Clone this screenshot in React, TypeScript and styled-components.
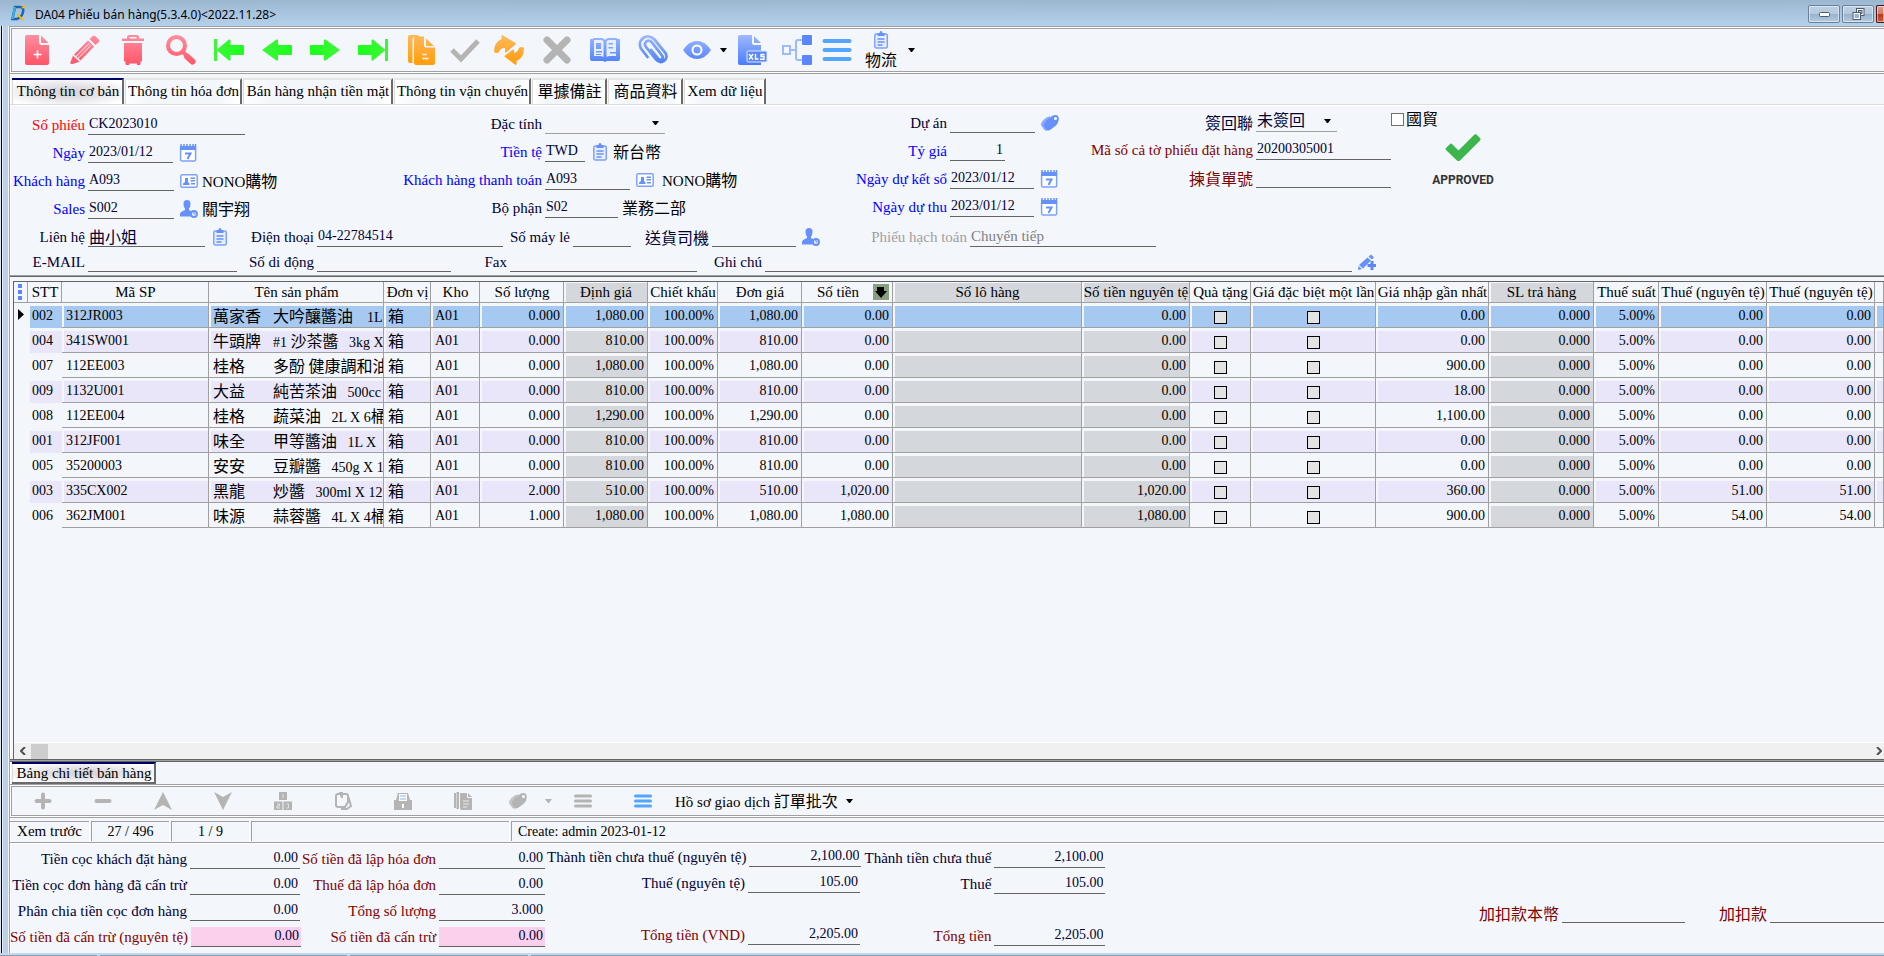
import React, { useId, useState } from "react";
import styled, { createGlobalStyle, css } from "styled-components";

const c = {
  page: "#f3f6fb",
  line: "#a0a0a0",
  dark: "#646464",
  ink: "#000033",
  blue: "#0000ff",
  red: "#ff0000",
  maroon: "#800000",
  muted: "#a0a0a0",
  frame: "#bcd1e6",
  icon: "#6691fb",
  grayIcon: "#b4b4b4",
};

const serif = `"Liberation Serif", "Noto Sans CJK TC", serif`;

const GlobalStyle = createGlobalStyle`
  *, *::before, *::after { box-sizing: border-box; }
  body { margin: 0; background: ${c.page}; overflow: hidden; }
  button, input, select { font: inherit; color: inherit; }
  body, button, input, select { font-family: ${serif}; }
`;

/* ---------- text ---------- */

const Han = styled.span`
  font-family: "Noto Sans CJK TC", sans-serif;
  font-size: 16px;
  font-weight: 400;
`;

/* Chinese runs are set one step larger than the Latin text beside them. */
function T({ children }: { children: string }) {
  const parts = children.split(/([\u3400-\u9fff]+)/);
  return (
    <>
      {parts.map((p, i) => (i % 2 ? <Han key={i}>{p}</Han> : p))}
    </>
  );
}

const hasHan = (s: string) => /[\u3400-\u9fff]/.test(s);

/* ---------- window frame ---------- */

const Window = styled.div`
  display: flex;
  flex-direction: column;
  min-height: 100vh;
  font-size: 15px;
  line-height: 20px;
  color: #000;
  background: ${c.page};
`;

const TitleBar = styled.header`
  display: flex;
  align-items: center;
  height: 26px;
  padding-left: 11px;
  overflow: hidden;
  background: linear-gradient(#9bb6cf, #a9c4de 50%, #b5d0ea);
`;

const Title = styled.h1`
  flex: 1;
  margin: 3px 0 0 9px;
  font-family: "Noto Sans", sans-serif;
  font-size: 12px;
  font-weight: 400;
  white-space: nowrap;
`;

const WinButtons = styled.div`
  display: flex;
  gap: 2px;
`;

const WinButton = styled.button<{ $close?: boolean }>`
  display: grid;
  place-items: center;
  width: ${(p) => (p.$close ? 8 : 32)}px;
  height: 18px;
  margin-top: 2px;
  padding: 0;
  border: 1px solid ${(p) => (p.$close ? "#4a1410" : "#6c7f96")};
  border-right-width: ${(p) => (p.$close ? 0 : 1)}px;
  border-radius: ${(p) => (p.$close ? "2px 0 0 2px" : "2px")};
  box-shadow: inset 0 0 0 1px rgba(255, 255, 255, 0.5);
  background: ${(p) =>
    p.$close
      ? "linear-gradient(#e0a093, #d07a68 48%, #b8391f 50%, #cc5a3c)"
      : "linear-gradient(#bdd0e3, #b4c9df 48%, #98b2cb 50%, #b2cae2)"};
`;

const Frame = styled.div`
  flex: 1;
  display: flex;
  flex-direction: column;
  min-width: 0;
  border-left: 1px solid ${c.line};
  box-shadow: inset 1px 0 #fff;
`;

const Body = styled.div`
  flex: 1;
  display: flex;
  padding-left: 9px;
  background: linear-gradient(
    to right,
    #d9e8f6 1px,
    #000 1px,
    #000 2px,
    #e8f1fa 2px,
    #e8f1fa 3px,
    ${c.frame} 3px,
    ${c.frame} 8px,
    ${c.page} 8px
  );
`;

const WindowFoot = styled.footer`
  display: flex;
  gap: 3px;
  height: 3px;
  padding-top: 2px;
  background: #c0d8f0;
`;

const FootPart = styled.div<{ $w?: number }>`
  flex: ${(p) => (p.$w ? `0 0 ${p.$w}px` : "1")};
  background: #8f9ba8;
`;

/* ---------- toolbars ---------- */

const Toolbar = styled.div<{ $h: number }>`
  display: flex;
  align-items: stretch;
  height: ${(p) => p.$h}px;
  padding-left: 1px;
  border: 1px solid ${c.line};
  border-right: 0;
  border-left: 0;
  box-shadow: inset 0 1px #fff, inset 0 -1px #fff, inset 1px 0 #fff;
`;

const ToolbarInner = styled.div`
  flex: 1;
  display: flex;
  margin: 1px 0;
  border: 1px solid ${c.line};
  border-right: 0;
  padding-left: 1px;
`;

const ToolButton = styled.button<{ $w: number }>`
  display: flex;
  flex-direction: column;
  align-items: center;
  justify-content: center;
  flex: 0 0 ${(p) => p.$w}px;
  padding: 0;
  border: 0;
  background: none;
  line-height: 20px;
  color: #000;
`;

const TextTool = styled.button`
  display: flex;
  align-items: center;
  gap: 8px;
  padding: 0 2px;
  border: 0;
  background: none;
  color: #000;
  white-space: pre;
`;

/* ---------- tabs ---------- */

const TabList = styled.div<{ $bottom?: boolean }>`
  display: flex;
  align-items: flex-end;
  gap: 1px;
  height: ${(p) => (p.$bottom ? 22 : 31)}px;
  padding: 0 2px;
  border-bottom: ${(p) => (p.$bottom ? 0 : 1)}px solid #dcdcdc;
`;

const Tab = styled.button<{ $active?: boolean; $w: number; $bottom?: boolean }>`
  flex: 0 0 ${(p) => p.$w}px;
  height: ${(p) => (p.$bottom ? 22 : 26)}px;
  padding: 0 0 2px 2px;
  border: 0;
  border-top: 2px solid ${(p) => (p.$active ? "#000066" : "#e6e6e6")};
  border-right: 2px solid #6a6a6a;
  border-bottom: ${(p) => (p.$bottom ? "2px solid #6a6a6a" : "0")};
  box-shadow: inset 1px 0 #dcdcdc;
  background: ${(p) =>
    p.$active
      ? "radial-gradient(ellipse at center, #d2d2d6 0%, #e6e6ea 45%, #fff 90%)"
      : "linear-gradient(to right, #fff, #f3f6fb 20%, #f3f6fb 80%, #fff)"};
  white-space: nowrap;
  line-height: 18px;
`;

/* ---------- fields ---------- */

type Tone = "ink" | "blue" | "red" | "maroon" | "muted";

const FieldBox = styled.div`
  display: flex;
  align-items: flex-end;
  gap: 3px;
`;

const Label = styled.label<{ $w: number; $tone: Tone }>`
  display: flex;
  justify-content: flex-end;
  flex: 0 0 ${(p) => p.$w + 1}px;
  height: 20px;
  white-space: pre;
  color: ${(p) => c[p.$tone]};
`;

const control = css`
  height: 22px;
  padding: 1px 2px 0 1px;
  border: 0;
  border-bottom: 1px solid ${c.dark};
  border-radius: 0;
  outline: 0;
  background: transparent;
  color: ${c.ink};
`;

const Input = styled.input<{ $w: number; $han: boolean; $pink?: boolean; $right?: boolean; $muted?: boolean }>`
  ${control}
  width: ${(p) => p.$w}px;
  font-size: ${(p) => (p.$han ? 16 : p.$muted ? 15 : 14)}px;
  text-align: ${(p) => (p.$right ? "right" : "left")};
  background: ${(p) =>
    p.$pink ? "linear-gradient(#fad0ec, #fad0ec) no-repeat 0 2px" : "transparent"};
  color: ${(p) => (p.$muted ? "#808080" : c.ink)};
`;

const SelectWrap = styled.div<{ $w: number }>`
  display: grid;
  align-items: center;
  width: ${(p) => p.$w}px;
  & > * {
    grid-area: 1 / 1;
  }
  & > svg {
    justify-self: end;
    margin-right: 6px;
    pointer-events: none;
  }
`;

const Select = styled.select`
  ${control}
  appearance: none;
  width: 100%;
  font-size: 16px;
  border-bottom-color: ${c.line};
`;

interface FieldProps {
  label: string;
  lw: number;
  w: number;
  value?: string;
  tone?: Tone;
  right?: boolean;
  pink?: boolean;
}

function Field({ label, lw, w, value = "", tone = "ink", right, pink }: FieldProps) {
  const id = useId();
  return (
    <FieldBox>
      <Label htmlFor={id} $w={lw} $tone={tone}>
        <span><T>{label}</T></span>
      </Label>
      <Input
        id={id}
        $w={w}
        $han={hasHan(value)}
        $right={right}
        $pink={pink}
        $muted={tone === "muted"}
        defaultValue={value}
      />
    </FieldBox>
  );
}

function SelectField({ label, lw, w, value }: FieldProps) {
  const id = useId();
  return (
    <FieldBox>
      <Label htmlFor={id} $w={lw} $tone="ink">
        <span><T>{label}</T></span>
      </Label>
      <SelectWrap $w={w}>
        <Select id={id} defaultValue={value}>
          <option>{value}</option>
        </Select>
        <Caret />
      </SelectWrap>
    </FieldBox>
  );
}

/* ---------- form layout ---------- */

const Form = styled.form`
  padding: 2px 0 3px;
  border-bottom: 1px solid ${c.line};
  box-shadow: inset 0 1px #fff, 0 1px ${c.dark};
`;

const FormTop = styled.div`
  display: flex;
`;

const Group = styled.div<{ $w: number; $lift?: number }>`
  flex: 0 0 ${(p) => p.$w}px;
  margin-top: ${(p) => -(p.$lift ?? 0)}px;
`;

const Row = styled.div<{ $h?: number }>`
  display: flex;
  align-items: flex-end;
  height: ${(p) => p.$h ?? 28}px;
`;

const IconButton = styled.button`
  display: flex;
  margin: 0 4px 1px 6px;
  padding: 0;
  border: 0;
  background: none;
`;

const Note = styled.output<{ $gap?: number }>`
  height: 21px;
  margin-left: ${(p) => p.$gap ?? 0}px;
  color: #000;
  white-space: nowrap;
`;

const CheckLabel = styled.label`
  display: flex;
  align-items: center;
  gap: 2px;
  height: 24px;
`;

const Box = styled.input<{ $gray?: boolean }>`
  appearance: none;
  flex: none;
  width: 13px;
  height: 13px;
  margin: 0;
  border: 1px solid ${(p) => (p.$gray ? "#000" : "#707070")};
  background: ${(p) => (p.$gray ? "#e3e3e3" : "#fff")};
`;

const Stamp = styled.div`
  display: flex;
  flex-direction: column;
  align-items: center;
  gap: 10px;
  width: 58px;
  margin: 3px 0 0 43px;
`;

const StampText = styled.strong`
  font-family: "Liberation Sans Narrow", Roboto, sans-serif;
  font-size: 12px;
  font-weight: 700;
  line-height: 16px;
  color: #333;
`;

/* ---------- grid ---------- */

const GridPanel = styled.section`
  flex: 1;
  display: flex;
  flex-direction: column;
  margin: 5px 0 0 3px;
  border: 1px solid ${c.dark};
  border-right: 0;
  border-bottom: 0;
  overflow: hidden;
`;

const GridBody = styled.div`
  flex: 1;
  overflow: hidden;
`;

const Table = styled.table`
  width: 100%;
  table-layout: fixed;
  border-collapse: separate;
  border-spacing: 0;
`;

const Th = styled.th<{ $gray?: boolean }>`
  height: 21px;
  padding: 0 0 0 1px;
  overflow: hidden;
  border-right: 1px solid ${c.line};
  border-bottom: 1px solid ${c.line};
  background: ${(p) => (p.$gray ? "#d4d7db" : c.page)};
  box-shadow: inset 2px 1px #f3f6fb;
  font-weight: 400;
  line-height: 20px;
  white-space: nowrap;
  & > svg {
    display: block;
  }
`;

const SortHead = styled.div`
  display: flex;
  align-items: center;
  justify-content: flex-end;
  gap: 14px;
  padding-right: 3px;
`;

const Td = styled.td<{ $fill: string; $align?: string; $bare?: boolean }>`
  height: 25px;
  padding: 0 ${(p) => (p.$align === "right" ? 3 : 0)}px 0 4px;
  overflow: hidden;
  border-right: 1px solid ${(p) => (p.$bare ? "transparent" : c.line)};
  border-bottom: 1px solid ${(p) => (p.$bare ? "transparent" : c.line)};
  background: linear-gradient(${(p) => p.$fill}, ${(p) => p.$fill}) no-repeat 2px 3px;
  text-align: ${(p) => p.$align ?? "left"};
  font-size: 14px;
  line-height: 23px;
  white-space: pre;
`;

const CellLine = styled.div`
  height: 23px;
  overflow: hidden;
`;

const CheckCell = styled.div`
  display: flex;
  justify-content: center;
  padding: 4px 3px 0 0;
`;

const Brand = styled.span`
  display: inline-block;
  width: 60px;
`;

const ScrollBar = styled.div`
  display: flex;
  align-items: center;
  height: 17px;
  border-top: 1px solid #fff;
  background: #f0f0f0;
`;

const ScrollEnd = styled.button<{ $w: number }>`
  display: grid;
  place-items: center;
  width: ${(p) => p.$w}px;
  padding: 0;
  border: 0;
  background: none;
`;

const ScrollTrack = styled.div`
  flex: 1;
  height: 15px;
`;

const ScrollThumb = styled.div`
  width: 17px;
  height: 15px;
  background: #cdcdcd;
`;

const GridEdge = styled.div`
  height: 3px;
  border-top: 1px solid ${c.dark};
  border-bottom: 1px solid ${c.dark};
  background: ${c.line};
`;

/* ---------- status and totals ---------- */

const StatusBar = styled.div`
  display: flex;
  gap: 2px;
  height: 25px;
  padding-top: 3px;
  border-bottom: 1px solid ${c.line};
`;

const StatusCell = styled.div<{ $w?: number; $left?: boolean }>`
  flex: ${(p) => (p.$w ? `0 0 ${p.$w}px` : "1")};
  height: 20px;
  padding: 0 6px;
  border-top: 1px solid ${c.line};
  border-left: 1px solid ${c.line};
  box-shadow: 1px 0 #fff;
  font-size: 14px;
  line-height: 19px;
  text-align: ${(p) => (p.$left ? "left" : "center")};
  &:first-child {
    border-left: 0;
    font-size: 15px;
  }
`;

const Totals = styled.form`
  display: flex;
  padding: 0 0 6px;
  box-shadow: inset 0 1px #fff;
`;

const TotalsSide = styled.div`
  flex: 1;
  display: flex;
  align-items: flex-start;
  justify-content: flex-end;
  gap: 33px;
  margin-top: 54px;
  overflow: hidden;
`;

/* ---------- drawings ---------- */

const Hidden = styled.svg`
  position: absolute;
  width: 0;
  height: 0;
`;

const grads: [string, string, string][] = [
  ["gPink", "#ff8f9f", "#ff5468"],
  ["gOrange", "#ffb95c", "#ff9c0a"],
  ["gBlue", "#9db9ff", "#4a7cfa"],
];

function Gradients() {
  return (
    <Hidden aria-hidden>
      <defs>
        {grads.map(([id, a, b]) => (
          <linearGradient key={id} id={id} gradientUnits="userSpaceOnUse" x1="0" y1="0" x2="0" y2="30">
            <stop offset="0" stopColor={a} />
            <stop offset="1" stopColor={b} />
          </linearGradient>
        ))}
        <linearGradient id="gGreen" gradientUnits="userSpaceOnUse" x1="0" y1="15" x2="30" y2="15">
          <stop offset="0" stopColor="#3ff53a" />
          <stop offset="1" stopColor="#1bff1b" />
        </linearGradient>
      </defs>
    </Hidden>
  );
}

const P = "url(#gPink)";
const O = "url(#gOrange)";
const B = "url(#gBlue)";
const G = "url(#gGreen)";

const Big = ({ children }: { children: React.ReactNode }) => (
  <svg width="30" height="30" viewBox="0 0 30 30" aria-hidden>{children}</svg>
);
const Small = ({ children }: { children: React.ReactNode }) => (
  <svg width="18" height="18" viewBox="0 0 18 18" aria-hidden>{children}</svg>
);

const Caret = ({ color = "#000" }: { color?: string }) => (
  <svg width="7" height="4" viewBox="0 0 7 4" aria-hidden><path d="M0 0h7L4 4H3z" fill={color} /></svg>
);

const NewIcon = () => (
  <Big>
    <path fill={P} d="M5 0h12v7a3 3 0 0 0 3 3h7v18a2 2 0 0 1-2 2H5a2 2 0 0 1-2-2V2a2 2 0 0 1 2-2zM19 0.5L26.500 8H20a1 1 0 0 1-1-1z" />
    <path stroke="#fff" strokeWidth="1.6" d="M15.500 15.500v8M11.500 19.500h8" />
  </Big>
);
const PencilIcon = () => (
  <Big>
    <path fill={P} d="M4 19.500L18 5.500l6 6L10.500 25.500zM19.500 4L22.500 1.300a2 2 0 0 1 3 0l3 3a2 2 0 0 1 0 3L25.500 10zM3 20.500l6.500 6.200-7 2.300a1.500 1.500 0 0 1-2-2z" />
    <path stroke="#fff" strokeWidth="1.200" d="M8 23.500L21 10M6 21.500L19 8.500" opacity=".6" />
  </Big>
);
const TrashIcon = () => (
  <Big>
    <path fill={P} d="M9 3.500V2a2 2 0 0 1 2-2h8a2 2 0 0 1 2 2v1.500h5V6H4V3.500zM11.500 3.500h7V2h-7zM6 8h18v18.500h-1.500V29a1 1 0 0 1-1 1H19v-1.500h-8V30H8.500a1 1 0 0 1-1-1v-2.500H6z" />
  </Big>
);
const SearchIcon = () => (
  <Big>
    <circle cx="10.500" cy="10.500" r="8.500" fill="none" stroke={P} strokeWidth="4" />
    <path stroke={P} strokeWidth="4" d="M16 16l4 4" />
    <path stroke={P} strokeWidth="6" strokeLinecap="round" d="M21 21.500l5.500 5" />
  </Big>
);
const Arrow = ({ bar, flip }: { bar?: boolean; flip?: boolean }) => (
  <Big>
    <g transform={flip ? "rotate(180 15 15)" : undefined} fill={G}>
      {bar && <path d="M0 4h3v22H0z" />}
      {bar ? (
        <path d="M2.500 15L15 4.500q1.500-.5 1.500 1V10H29q1 0 1 1v8q0 1-1 1H16.500v4.500q0 1.500-1.500 1z" />
      ) : (
        <path d="M0 15L14.500 4.500q1.500-.5 1.500 1V10h13q1 0 1 1v8q0 1-1 1H16v4.500q0 1.500-1.500 1z" />
      )}
    </g>
  </Big>
);
const CopyIcon = () => (
  <Big>
    <path fill={O} d="M4 0h7q2 0 3 2H8.500q-2 0-2 3v23H4q-2 0-2-2V2q0-2 2-2z" />
    <path fill={O} d="M10 1.500h8v9q0 2 2 2h9V28q0 2-2 2H10q-2 0-2-2V3.500q0-2 2-2zM20 3.500L28 11h-7.500q-.5 0-.5-.5z" />
    <path stroke="#fff" strokeWidth="1.500" d="M16.500 19.500h4M16.500 23.500h6" />
  </Big>
);
const CheckIcon = () => (
  <Big><path fill="none" stroke={c.grayIcon} strokeWidth="5" d="M2 15l9 9L28 6" /></Big>
);
const RefreshIcon = () => (
  <Big>
    <path fill={O} d="M0 17Q0 7 7.500 4V1q0-1.500 1.500-.5l12.500 7.500q1 .8 0 1.500L12 17.500q-1 .5-1-1V13q-5 0-6 4-2 2-5 0z" />
    <path fill={O} d="M30 13q0 10-7.500 13v3q0 1.500-1.500.5L11 22q-1-.8 0-1.500l8-6q1-.5 1 1V18q4-1 5-5 2-2 5 0z" />
  </Big>
);
const CrossIcon = () => (
  <Big><path stroke={c.grayIcon} strokeWidth="7" strokeLinecap="round" d="M5 5l20 20M25 5L5 25" /></Big>
);
const BookIcon = () => (
  <Big>
    <path fill={B} d="M0 5q0-1 1-1h2V3h8q3 0 4 2 1-2 4-2h8v1h2q1 0 1 1v19q0 2-2 2H17l-2 1-2-1H2q-2 0-2-2z" />
    <path fill="#e7eeff" d="M4 5h7q2 0 2.500 1.500V22Q12 21 10 21H4zM26 5h-7q-2 0-2.500 1.500V22q1.500-1 3.500-1h6z" />
    <path fill={B} d="M6 8h5v6H6zM6 16h6v1.500H6zM6 19h5v1H6zM18.500 8H23v1.500h-4.500zM18.500 12H23v1.500h-4.500zM20 17h6v1.500h-6z" />
  </Big>
);
const ClipIcon = () => (
  <Big>
    <path
      fill="none" stroke={B} strokeWidth="2.800" strokeLinecap="round"
      d="M13 15l7 8.500c3 3 6 0 4-3L13.500 7C10 3 5 8 8 12l10 12.500c5 6 13 0 9.500-6.500L16.500 4.500C9-3 -1.500 5 3 13.500L9.500 22"
    />
  </Big>
);
const EyeIcon = () => (
  <Big>
    <path fill={B} d="M1 15Q7 6 15 6t14 9q-6 9-14 9T1 15z" />
    <circle cx="15" cy="15" r="4.500" fill="none" stroke="#fff" strokeWidth="2" />
  </Big>
);
const XlsIcon = () => (
  <Big>
    <path fill={B} d="M2 0h12v8q0 2 2 2h7v20H2q-2 0-2-2V2q0-2 2-2zM16 1l7 7h-6q-1 0-1-1z" />
    <rect x="9" y="16" width="20" height="11" rx="1" fill="#5b87fb" stroke="#dfe8ff" />
    <path fill="none" stroke="#fff" strokeWidth="1.400" d="M11 19l4 5.500M15 19l-4 5.500M17.500 19v5h3M26.500 19.500h-3.500v2h3v2.800h-4" />
  </Big>
);
const TreeIcon = () => (
  <Big>
    <path fill="none" stroke="#9db9ff" strokeWidth="2" d="M8 15h6M21 5h-5q-2 0-2 2v16q0 2 2 2h5" />
    <rect x="1" y="11" width="7" height="8" fill="#f3f6fb" stroke="#9db9ff" strokeWidth="2" />
    <rect x="20" y="0" width="10" height="10" rx="1" fill="#5b87fb" />
    <rect x="20" y="20" width="10" height="10" rx="1" fill="#5b87fb" />
  </Big>
);
const MenuIcon = () => (
  <Big><path stroke="#53a5fe" strokeWidth="4" strokeLinecap="round" d="M2.500 6h25M2.500 15h25M2.500 24h25" /></Big>
);

const ClipboardIcon = () => (
  <Small>
    <rect x="2.800" y="3" width="12.500" height="14" rx="1.500" fill="#e7eeff" stroke="#7ea2fc" strokeWidth="1.500" />
    <path fill={c.icon} d="M5.500 2h2q0-2 1.500-2t1.500 2h2v3h-7z" />
    <path stroke={c.icon} strokeWidth="1.400" d="M5.500 8h7M5.500 11h7M5.500 14h5" />
  </Small>
);
const CalendarIcon = () => (
  <Small>
    <rect x="1.600" y="3" width="15" height="14" rx="1.500" fill="#fff" stroke="#7ea2fc" strokeWidth="1.500" />
    <path fill={c.icon} d="M1 2h16v4H1z" />
    <path stroke={c.icon} strokeWidth="1.500" d="M2 0v4M5 0v4M8 0v4M11 0v4M14 0v4M16.500 0v4" />
    <path fill="none" stroke={c.icon} strokeWidth="2" d="M6 9.500h5.500L8.500 15" />
  </Small>
);
const CardIcon = () => (
  <Small>
    <rect x=".8" y="2.800" width="16.400" height="12.400" rx="1.500" fill="#fff" stroke="#7ea2fc" strokeWidth="1.500" />
    <path fill={c.icon} d="M3 13v-1.500L5 10V6h3v4l1.500 1.500V13zM10.500 5.500H15V7h-4.500zM10.500 8H15v1.500h-4.500zM11 11h4v1.500h-4z" />
  </Small>
);
const PersonIcon = () => (
  <Small>
    <path fill={c.icon} d="M3.500 3.500Q3.500 0 7 0t3.500 3.500Q10.500 7 9 8.500V10l2.500 1.200Q10 13.500 11 16.500H0V14q0-2 5-4V8.500Q3.500 7 3.500 3.500z" />
    <circle cx="14" cy="14" r="3" fill="#e7eeff" stroke={c.icon} strokeWidth="1.800" />
    <path fill="none" stroke={c.icon} d="M14 12v2h1.500" />
  </Small>
);
const TagIcon = ({ color = c.icon }: { color?: string }) => (
  <Small>
    <path fill={color} opacity=".75" d="M9 2Q3 4 .5 8.500q-1 2 0 3.500l3 4q1 1 3 .5z" />
    <path fill={color} d="M3 10q3-5 8-8 3-1.500 5.500-.5 1.500 1 1.300 4Q17.500 9 15 11.500L9 16q-2 1.200-3.500-.5L3 12.500q-.8-1.200 0-2.500z" />
    <circle cx="14.500" cy="4.500" r="1.500" fill="#fff" />
  </Small>
);
const EditPlusIcon = () => (
  <Small>
    <path fill={c.icon} d="M1 12L9.500 4.500l3.500 3L5 15.500zM10.500 3.500L13 1.500l3 3-2 2zM.5 13l3.500 3-4 1z" />
    <path stroke="#5b87fb" strokeWidth="3" d="M14 8v9M9.500 12.500H18" />
  </Small>
);

const g = c.grayIcon;
const gridIcons: [string, React.ReactNode][] = [
  ["Thêm", <Small><path fill="none" stroke={g} strokeWidth="4" strokeLinecap="round" d="M9 2.500v13M2.500 9h13" /></Small>],
  ["Bớt", <Small><path stroke={g} strokeWidth="4" strokeLinecap="round" d="M2.500 9h13" /></Small>],
  ["Lên", <Small><path fill={g} d="M9 0l9 18-9-5-9 5z" /></Small>],
  ["Xuống", <Small><path fill={g} d="M9 18L0 0l9 5 9-5z" /></Small>],
  ["Khối", <Small><path fill={g} d="M5 0h8v8H5zM0 9.500h8.500V18H0zM9.500 9.500H18V18H9.500z" /><path stroke="#e4e4e4" fill="none" d="M9 2v4M3 12h2.500v2H3v2h3M12.500 12h2v4h-2" /></Small>],
  ["Ghi chú", <Small><path fill="none" stroke={g} strokeWidth="2" d="M4 2h8q2 0 2 2v6l-3 5H4q-2 0-2-2V4q0-2 2-2zM14 4l3 10-4 3H7" /><path fill={g} d="M5 0h4v6H7z" /></Small>],
  ["Khóa", <Small><path fill={g} d="M2 8l2-7h10l2 7h2v10H0V8z" /><path fill="#fff" d="M5 2h8v7H5z" /><path stroke="#8fb4e8" d="M6 4h6M6 7h6" /><path fill="#fff" d="M8 12h2v4H8z" /></Small>],
  ["Sao chép", <Small><path fill={g} d="M0 1h2v15H0zM2.500 0H5v17H2.500zM6 1h7v4q0 1 1 1h4v12H8q-2 0-2-2zM14 1l4 4h-4z" /><path stroke="#e8e8e8" d="M9 9h6M9 12h6M9 15h4" /></Small>],
];
const SmallMenu = ({ color }: { color: string }) => (
  <Small><path stroke={color} strokeWidth="3" strokeLinecap="round" d="M1.500 4h15M1.500 9h15M1.500 14h15" /></Small>
);

/* ---------- data ---------- */

const mainTools: { name: string; w: number; icon: React.ReactNode; text?: string }[] = [
  { name: "Thêm mới", w: 48, icon: <NewIcon /> },
  { name: "Sửa", w: 48, icon: <PencilIcon /> },
  { name: "Xóa", w: 48, icon: <TrashIcon /> },
  { name: "Tìm", w: 48, icon: <SearchIcon /> },
  { name: "Đầu", w: 48, icon: <Arrow bar /> },
  { name: "Trước", w: 48, icon: <Arrow /> },
  { name: "Sau", w: 48, icon: <Arrow flip /> },
  { name: "Cuối", w: 48, icon: <Arrow bar flip /> },
  { name: "Sao chép", w: 48, icon: <CopyIcon /> },
  { name: "Duyệt", w: 40, icon: <CheckIcon /> },
  { name: "Làm mới", w: 48, icon: <RefreshIcon /> },
  { name: "Hủy", w: 48, icon: <CrossIcon /> },
  { name: "Sổ", w: 48, icon: <BookIcon /> },
  { name: "Đính kèm", w: 48, icon: <ClipIcon /> },
  { name: "Xem", w: 40, icon: <EyeIcon /> },
  { name: "Tùy chọn xem", w: 12, icon: <Caret /> },
  { name: "Xuất XLS", w: 48, icon: <XlsIcon /> },
  { name: "Liên kết", w: 40, icon: <TreeIcon /> },
  { name: "Danh sách", w: 40, icon: <MenuIcon /> },
  { name: "物流", w: 48, icon: <ClipboardIcon />, text: "物流" },
  { name: "Tùy chọn 物流", w: 12, icon: <Caret /> },
];

const tabs: [string, number][] = [
  ["Thông tin cơ bản", 112],
  ["Thông tin hóa đơn", 117],
  ["Bán hàng nhận tiền mặt", 150],
  ["Thông tin vận chuyển", 137],
  ["單據備註", 75],
  ["商品資料", 75],
  ["Xem dữ liệu", 82],
];

type Kind = "text" | "num" | "check" | "sort";
const columns: { name: string; w?: number; kind: Kind; gray?: boolean }[] = [
  { name: "STT", w: 34, kind: "text" },
  { name: "Mã SP", w: 147, kind: "text" },
  { name: "Tên sản phẩm", w: 175, kind: "text" },
  { name: "Đơn vị", w: 47, kind: "text" },
  { name: "Kho", w: 49, kind: "text" },
  { name: "Số lượng", w: 84, kind: "num" },
  { name: "Định giá", w: 84, kind: "num", gray: true },
  { name: "Chiết khấu", w: 70, kind: "num" },
  { name: "Đơn giá", w: 84, kind: "num" },
  { name: "Số tiền", w: 91, kind: "sort" },
  { name: "Số lô hàng", w: 189, kind: "num", gray: true },
  { name: "Số tiền nguyên tệ", w: 108, kind: "num", gray: true },
  { name: "Quà tặng", w: 61, kind: "check" },
  { name: "Giá đặc biệt một lần", w: 125, kind: "check" },
  { name: "Giá nhập gần nhất", w: 113, kind: "num" },
  { name: "SL trả hàng", w: 105, kind: "num", gray: true },
  { name: "Thuế suất", w: 65, kind: "num" },
  { name: "Thuế (nguyên tệ)", w: 108, kind: "num" },
  { name: "Thuế (nguyên tệ)", w: 108, kind: "num" },
  { name: "", kind: "num" },
];

const items: [string, string, string, string, string, string, string, string, string][] = [
  ["002", "312JR003", "萬家香", "大吟釀醬油    1L", "0.000", "1,080.00", "0.00", "0.00", "0.00"],
  ["004", "341SW001", "牛頭牌", "#1 沙茶醬   3kg X", "0.000", "810.00", "0.00", "0.00", "0.00"],
  ["007", "112EE003", "桂格", "多酚 健康調和油", "0.000", "1,080.00", "0.00", "900.00", "0.00"],
  ["009", "1132U001", "大益", "純苦茶油   500cc", "0.000", "810.00", "0.00", "18.00", "0.00"],
  ["008", "112EE004", "桂格", "蔬菜油   2L X 6桶", "0.000", "1,290.00", "0.00", "1,100.00", "0.00"],
  ["001", "312JF001", "味全", "甲等醬油   1L X", "0.000", "810.00", "0.00", "0.00", "0.00"],
  ["005", "35200003", "安安", "豆瓣醬   450g X 1", "0.000", "810.00", "0.00", "0.00", "0.00"],
  ["003", "335CX002", "黑龍", "炒醬   300ml X 12", "2.000", "510.00", "1,020.00", "360.00", "51.00"],
  ["006", "362JM001", "味源", "蒜蓉醬   4L X 4桶", "1.000", "1,080.00", "1,080.00", "900.00", "54.00"],
];

/* ---------- sections ---------- */

function ItemGrid() {
  const [selected, setSelected] = useState(0);
  return (
    <GridPanel>
      <GridBody>
        <Table>
          <colgroup>
            <col style={{ width: 14 }} />
            {columns.map((col, i) => (
              <col key={i} style={{ width: col.w }} />
            ))}
          </colgroup>
          <thead>
            <tr>
              <Th aria-label="Menu">
                <svg width="10" height="16" viewBox="0 0 10 16" aria-hidden>
                  <path fill="#5b87fb" d="M3 0h4v4H3zM3 6h4v4H3zM3 12h4v4H3z" />
                </svg>
              </Th>
              {columns.map((col, i) => (
                <Th key={i} $gray={col.gray}>
                  {col.kind === "sort" ? (
                    <SortHead>
                      {col.name}
                      <svg width="16" height="16" viewBox="0 0 16 16" aria-hidden>
                        <path fill="#86a080" d="M0 0h16v16H0z" />
                        <path d="M4 3h7v4h3l-6 7-6-7h2z" />
                      </svg>
                    </SortHead>
                  ) : (
                    col.name
                  )}
                </Th>
              ))}
            </tr>
          </thead>
          <tbody>
            {items.map(([no, code, brand, product, qty, price, amount, last, tax], r) => {
              const values = [no, code, "", "箱", "A01", qty, price, "100.00%", price, amount, "", amount, "", "", last, "0.000", "5.00%", tax, tax, ""];
              return (
                <tr key={no} onClick={() => setSelected(r)}>
                  <Td $bare $fill={c.page}>
                    {r === selected && (
                      <svg width="6" height="11" viewBox="0 0 6 11" aria-hidden><path d="M0 0l6 5.500L0 11z" /></svg>
                    )}
                  </Td>
                  {columns.map((col, i) => {
                    const fill = r === selected ? "#a6c9f1" : col.gray ? "#d4d7db" : r % 2 ? "#e8e6f8" : c.page;
                    const numeric = col.kind === "num" || col.kind === "sort";
                    return (
                      <Td key={i} $bare={i === 0} $fill={fill} $align={numeric ? "right" : "left"}>
                        {col.kind === "check" ? (
                          <CheckCell>
                            <Box type="checkbox" $gray aria-label={`${col.name} ${no}`} />
                          </CheckCell>
                        ) : (
                          <CellLine>
                            {i === 2 ? (
                              <>
                                <Brand><T>{brand}</T></Brand>
                                <T>{product}</T>
                              </>
                            ) : (
                              <T>{values[i]}</T>
                            )}
                          </CellLine>
                        )}
                      </Td>
                    );
                  })}
                </tr>
              );
            })}
          </tbody>
        </Table>
      </GridBody>
      <ScrollBar>
        <ScrollEnd $w={17} aria-label="Cuộn trái">
          <svg width="6" height="8" viewBox="0 0 6 8" aria-hidden><path fill="none" stroke="#505050" strokeWidth="2" d="M5 0L1 4l4 4" /></svg>
        </ScrollEnd>
        <ScrollTrack><ScrollThumb /></ScrollTrack>
        <ScrollEnd $w={10} aria-label="Cuộn phải">
          <svg width="6" height="8" viewBox="0 0 6 8" aria-hidden><path fill="none" stroke="#505050" strokeWidth="2" d="M1 0l4 4-4 4" /></svg>
        </ScrollEnd>
      </ScrollBar>
    </GridPanel>
  );
}

function Lookup({ name, children }: { name: string; children: React.ReactNode }) {
  return <IconButton type="button" aria-label={name}>{children}</IconButton>;
}

function HeaderForm() {
  return (
    <Form>
      <FormTop>
        <Group $w={390}>
          <Row><Field label="Số phiếu" lw={74} w={157} value="CK2023010" tone="red" /></Row>
          <Row>
            <Field label="Ngày" lw={74} w={85} value="2023/01/12" tone="blue" />
            <Lookup name="Chọn ngày"><CalendarIcon /></Lookup>
          </Row>
          <Row>
            <Field label="Khách hàng" lw={74} w={86} value="A093" tone="blue" />
            <Lookup name="Chọn khách hàng"><CardIcon /></Lookup>
            <Note><T>NONO購物</T></Note>
          </Row>
          <Row>
            <Field label="Sales" lw={74} w={86} value="S002" tone="blue" />
            <Lookup name="Chọn sales"><PersonIcon /></Lookup>
            <Note><T>關宇翔</T></Note>
          </Row>
        </Group>
        <Group $w={450} $lift={1}>
          <Row><SelectField label="Đặc tính" lw={141} w={120} value="" /></Row>
          <Row>
            <Field label="Tiền tệ" lw={141} w={40} value="TWD" tone="blue" />
            <Lookup name="Chọn tiền tệ"><ClipboardIcon /></Lookup>
            <Note><T>新台幣</T></Note>
          </Row>
          <Row>
            <Field label="Khách hàng thanh toán" lw={141} w={85} value="A093" tone="blue" />
            <Lookup name="Chọn khách thanh toán"><CardIcon /></Lookup>
            <Note $gap={4}><T>NONO購物</T></Note>
          </Row>
          <Row>
            <Field label="Bộ phận" lw={141} w={73} value="S02" />
            <Note $gap={4}><T>業務二部</T></Note>
          </Row>
        </Group>
        <Group $w={225} $lift={2}>
          <Row>
            <Field label="Dự án" lw={96} w={85} />
            <Lookup name="Chọn dự án"><TagIcon /></Lookup>
          </Row>
          <Row><Field label="Tỷ giá" lw={96} w={55} value="1" tone="blue" right /></Row>
          <Row>
            <Field label="Ngày dự kết sổ" lw={96} w={84} value="2023/01/12" tone="blue" />
            <Lookup name="Chọn ngày kết sổ"><CalendarIcon /></Lookup>
          </Row>
          <Row>
            <Field label="Ngày dự thu" lw={96} w={84} value="2023/01/12" tone="blue" />
            <Lookup name="Chọn ngày thu"><CalendarIcon /></Lookup>
          </Row>
        </Group>
        <Group $w={311} $lift={3}>
          <Row><SelectField label="簽回聯" lw={177} w={81} value="未簽回" /></Row>
          <Row><Field label="Mã số cả tờ phiếu đặt hàng" lw={177} w={135} value="20200305001" tone="maroon" /></Row>
          <Row><Field label="揀貨單號" lw={177} w={135} tone="maroon" /></Row>
        </Group>
        <div>
          <CheckLabel>
            <Box type="checkbox" />
            <span><T>國貿</T></span>
          </CheckLabel>
          <Stamp>
            <svg width="36" height="28" viewBox="0 0 36 28" aria-hidden>
              <path fill="#3cb54a" d="M1 14l4-4q1-1 2 0l6.500 6.500L29.500.5q1-.7 2 0l3.500 3.500q1 1 0 2.500L15 26.500q-1.500 1.200-3 0L1 16q-1-1 0-2z" />
            </svg>
            <StampText>APPROVED</StampText>
          </Stamp>
        </div>
      </FormTop>
      <Row>
        <Field label="Liên hệ" lw={74} w={117} value="曲小姐" />
        <Lookup name="Chọn liên hệ"><ClipboardIcon /></Lookup>
        <Field label="Điện thoại" lw={80} w={186} value="04-22784514" />
        <Field label="Số máy lẻ" lw={66} w={58} />
        <Field label="送貨司機" lw={77} w={84} />
        <Lookup name="Chọn tài xế"><PersonIcon /></Lookup>
        <Field label="Phiếu hạch toán" lw={142} w={186} value="Chuyển tiếp" tone="muted" />
      </Row>
      <Row $h={25}>
        <Field label="E-MAIL" lw={74} w={149} />
        <Field label="Số di động" lw={76} w={134} />
        <Field label="Fax" lw={55} w={187} />
        <Field label="Ghi chú" lw={64} w={587} />
        <Lookup name="Sửa ghi chú"><EditPlusIcon /></Lookup>
      </Row>
    </Form>
  );
}

function TotalsForm() {
  return (
    <Totals>
      <Group $w={290}>
        <Row $h={26}><Field label="Tiền cọc khách đặt hàng" lw={176} w={110} value="0.00" right /></Row>
        <Row $h={26}><Field label="Tiền cọc đơn hàng đã cấn trừ" lw={176} w={110} value="0.00" right /></Row>
        <Row $h={26}><Field label="Phân chia tiền cọc đơn hàng" lw={176} w={110} value="0.00" right /></Row>
        <Row $h={26}><Field label="Số tiền đã cấn trừ (nguyên tệ)" lw={176} w={110} value="0.00" tone="maroon" right pink /></Row>
      </Group>
      <Group $w={246}>
        <Row $h={26}><Field label="Số tiền đã lập hóa đơn" lw={134} w={106} value="0.00" tone="maroon" right /></Row>
        <Row $h={26}><Field label="Thuế đã lập hóa đơn" lw={134} w={106} value="0.00" tone="maroon" right /></Row>
        <Row $h={26}><Field label="Tổng số lượng" lw={134} w={106} value="3.000" tone="maroon" right /></Row>
        <Row $h={26}><Field label="Số tiền đã cấn trừ" lw={134} w={106} value="0.00" tone="maroon" right pink /></Row>
      </Group>
      <Group $w={313} $lift={2}>
        <Row $h={26}><Field label="Thành tiền chưa thuế (nguyên tệ)" lw={197} w={112} value="2,100.00" right /></Row>
        <Row $h={26}><Field label="Thuế (nguyên tệ)" lw={197} w={112} value="105.00" right /></Row>
        <Row $h={26} />
        <Row $h={26}><Field label="Tổng tiền (VND)" lw={197} w={112} value="2,205.00" tone="maroon" right /></Row>
      </Group>
      <Group $w={246} $lift={1}>
        <Row $h={26}><Field label="Thành tiền chưa thuế" lw={129} w={111} value="2,100.00" right /></Row>
        <Row $h={26}><Field label="Thuế" lw={129} w={111} value="105.00" right /></Row>
        <Row $h={26} />
        <Row $h={26}><Field label="Tổng tiền" lw={129} w={111} value="2,205.00" tone="maroon" right /></Row>
      </Group>
      <TotalsSide>
        <Row $h={26}><Field label="加扣款本幣" lw={80} w={123} tone="maroon" /></Row>
        <Row $h={26}><Field label="加扣款" lw={48} w={114} tone="maroon" /></Row>
      </TotalsSide>
    </Totals>
  );
}

export default function App() {
  const [tab, setTab] = useState(0);
  return (
    <Window>
      <GlobalStyle />
      <Gradients />
      <TitleBar>
        <svg width="15" height="16" viewBox="0 0 15 16" aria-hidden>
          <path fill="none" stroke="#1b66b5" strokeWidth="2.500" d="M4 2h5q4 0 3 5t-6 7H1.500z" />
          <path fill="none" stroke="#f3b90c" strokeWidth="2" d="M15 .5L11 3M6 9l6 6" />
          <path stroke="#39b2e0" strokeWidth="2" d="M4 2L1.500 14" />
        </svg>
        <Title>DA04 Phiếu bán hàng(5.3.4.0)&lt;2022.11.28&gt;</Title>
        <WinButtons>
          <WinButton aria-label="Thu nhỏ">
            <svg width="11" height="5" viewBox="0 0 11 5" aria-hidden><rect x=".5" y=".5" width="10" height="4" rx="1" fill="#fff" stroke="#4c5a6b" /></svg>
          </WinButton>
          <WinButton aria-label="Khôi phục">
            <svg width="13" height="12" viewBox="0 0 13 12" aria-hidden>
              <rect x="5.500" y="1.500" width="5.500" height="5" fill="none" stroke="#4c5a6b" strokeWidth="3" />
              <rect x="5.500" y="1.500" width="5.500" height="5" fill="none" stroke="#fff" />
              <rect x="2" y="5.500" width="5.500" height="5" fill="#9cb5ce" stroke="#4c5a6b" strokeWidth="3" />
              <rect x="2" y="5.500" width="5.500" height="5" fill="#9cb5ce" stroke="#fff" />
            </svg>
          </WinButton>
          <WinButton $close aria-label="Đóng" />
        </WinButtons>
      </TitleBar>
      <Body>
        <Frame>
          <Toolbar $h={48}>
            <ToolbarInner>
              {mainTools.map((t) => (
                <ToolButton key={t.name} $w={t.w} aria-label={t.name}>
                  {t.icon}
                  {t.text && <T>{t.text}</T>}
                </ToolButton>
              ))}
            </ToolbarInner>
          </Toolbar>
          <TabList role="tablist">
            {tabs.map(([name, w], i) => (
              <Tab key={name} role="tab" aria-selected={i === tab} $active={i === tab} $w={w} onClick={() => setTab(i)}>
                <T>{name}</T>
              </Tab>
            ))}
          </TabList>
          <HeaderForm />
          <ItemGrid />
          <GridEdge />
          <TabList $bottom role="tablist">
            <Tab role="tab" aria-selected $active $bottom $w={144}>Bảng chi tiết bán hàng</Tab>
          </TabList>
          <Toolbar $h={34}>
            <ToolbarInner>
              {gridIcons.map(([name, icon]) => (
                <ToolButton key={name} $w={60} aria-label={name}>{icon}</ToolButton>
              ))}
              <ToolButton $w={50} aria-label="Nhãn"><TagIcon color={g} /></ToolButton>
              <ToolButton $w={10} aria-label="Tùy chọn nhãn"><Caret color={g} /></ToolButton>
              <ToolButton $w={60} aria-label="Danh sách"><SmallMenu color={g} /></ToolButton>
              <ToolButton $w={60} aria-label="Danh sách chi tiết"><SmallMenu color="#53a5fe" /></ToolButton>
              <TextTool>
                <span><T>Hồ sơ giao dịch 訂單批次</T></span>
                <Caret />
              </TextTool>
            </ToolbarInner>
          </Toolbar>
          <StatusBar>
            <StatusCell $w={79}>Xem trước</StatusCell>
            <StatusCell $w={78}>27 / 496</StatusCell>
            <StatusCell $w={78}>1 / 9</StatusCell>
            <StatusCell $w={258} />
            <StatusCell $left>Create: admin 2023-01-12</StatusCell>
          </StatusBar>
          <TotalsForm />
        </Frame>
      </Body>
      <WindowFoot>
        <FootPart $w={97} />
        <FootPart $w={247} />
        <FootPart $w={178} />
        <FootPart />
      </WindowFoot>
    </Window>
  );
}
